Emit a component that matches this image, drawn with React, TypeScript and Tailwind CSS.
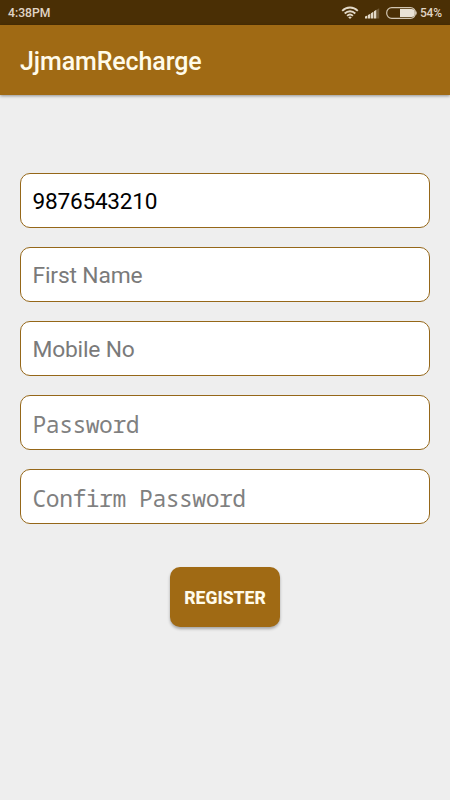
const mono = "font-['Noto_Sans_Mono','Droid_Sans_Mono','DejaVu_Sans_Mono',monospace] text-[23px] leading-8 tracking-[-0.48px]";

const fields = [
  { text: "9876543210", cls: "text-[22.6px] tracking-[-0.22px] text-black" },
  { text: "First Name", cls: "text-[22.8px] tracking-[-0.15px] text-[#7a7a7a]" },
  { text: "Mobile No", cls: "text-[22.8px] tracking-[-0.2px] text-[#7a7a7a]" },
  { text: "Password", cls: mono + " text-[#808080]" },
  { text: "Confirm Password", cls: mono + " text-[#808080]" },
];

function WifiIcon() {
  return (
    <svg width="18" height="13" viewBox="0 0 18 13" fill="none" stroke="#e3d9c8" strokeWidth="1.8">
      <path d="M1.2 4.8C5.6.4 12.4.4 16.8 4.8" />
      <path d="M3.7 7.5c3-3 7.6-3 10.6 0" />
      <path d="M6.1 9.8c1.7-1.6 4.1-1.6 5.8 0" />
      <path d="M7.2 11.2 9 12.9l1.8-1.7Q9 9.8 7.2 11.2Z" fill="#e3d9c8" stroke="none" />
    </svg>
  );
}

function SignalIcon() {
  return (
    <svg width="15" height="11" viewBox="0 0 15 11" fill="#e3d9c8">
      <path d="M0 8.6 2.4 7.5v3H0zM3 7.1l2.4-1.3v4.7H3zM6 5.2l2.4-1.4v6.7H6zM9 3.2l2.4-1.5v8.8H9z" />
      <path d="M12 1.4 14.2.2v10.3H12z" opacity=".25" />
    </svg>
  );
}

function BatteryIcon() {
  return (
    <svg width="31" height="12" viewBox="0 0 31 12">
      <rect x=".7" y=".7" width="28.8" height="10.6" rx="5" fill="none" stroke="#d2c6b2" strokeWidth="1.2" />
      <path d="M14 1.9h11.5a3.3 3.3 0 0 1 3.3 3.3v1.6a3.3 3.3 0 0 1-3.3 3.3H14z" fill="#e9e2d6" />
      <path d="M30.2 4.5v3" stroke="#d2c6b2" />
    </svg>
  );
}

export default function App() {
  return (
    <div className="h-[800px] w-[450px] bg-[#eeeeee] font-['Roboto',sans-serif]">
      <div className="flex h-[25px] items-center bg-[#4a2f05] pr-[5px] pl-[8px] text-[#e0d5c5]">
        <span className="flex-1 pt-px text-[12.2px] font-medium">4:38PM</span>
        <WifiIcon />
        <span className="ml-[6px] pt-0.5"><SignalIcon /></span>
        <span className="ml-[6px]"><BatteryIcon /></span>
        <span className="ml-[3px] w-[25px] text-[12px] font-medium tracking-[-0.2px]">54%</span>
      </div>
      <header className="flex h-[70px] items-center bg-[#a06a14] px-5 pt-[3px] text-[25px] font-medium tracking-[-0.1px] text-[#fffbea] shadow-[0_1px_3px_rgba(0,0,0,0.4)]">
        JjmamRecharge
      </header>
      <main className="flex flex-col items-center gap-[19px] px-5 pt-[78px]">
        {fields.map((f) => (
          <div key={f.text} className="flex h-[55px] w-full items-center rounded-[10px] border border-[#956719] bg-white px-[11.5px] pt-[3px]">
            <span className={f.cls}>{f.text}</span>
          </div>
        ))}
        <button className="mt-6 h-[60px] w-[110px] rounded-[10px] bg-[#a06a14] pt-[2px] text-[17.6px] font-extrabold text-[#fffbea] shadow-[0_2px_3px_rgba(0,0,0,0.3)]">
          REGISTER
        </button>
      </main>
    </div>
  );
}
